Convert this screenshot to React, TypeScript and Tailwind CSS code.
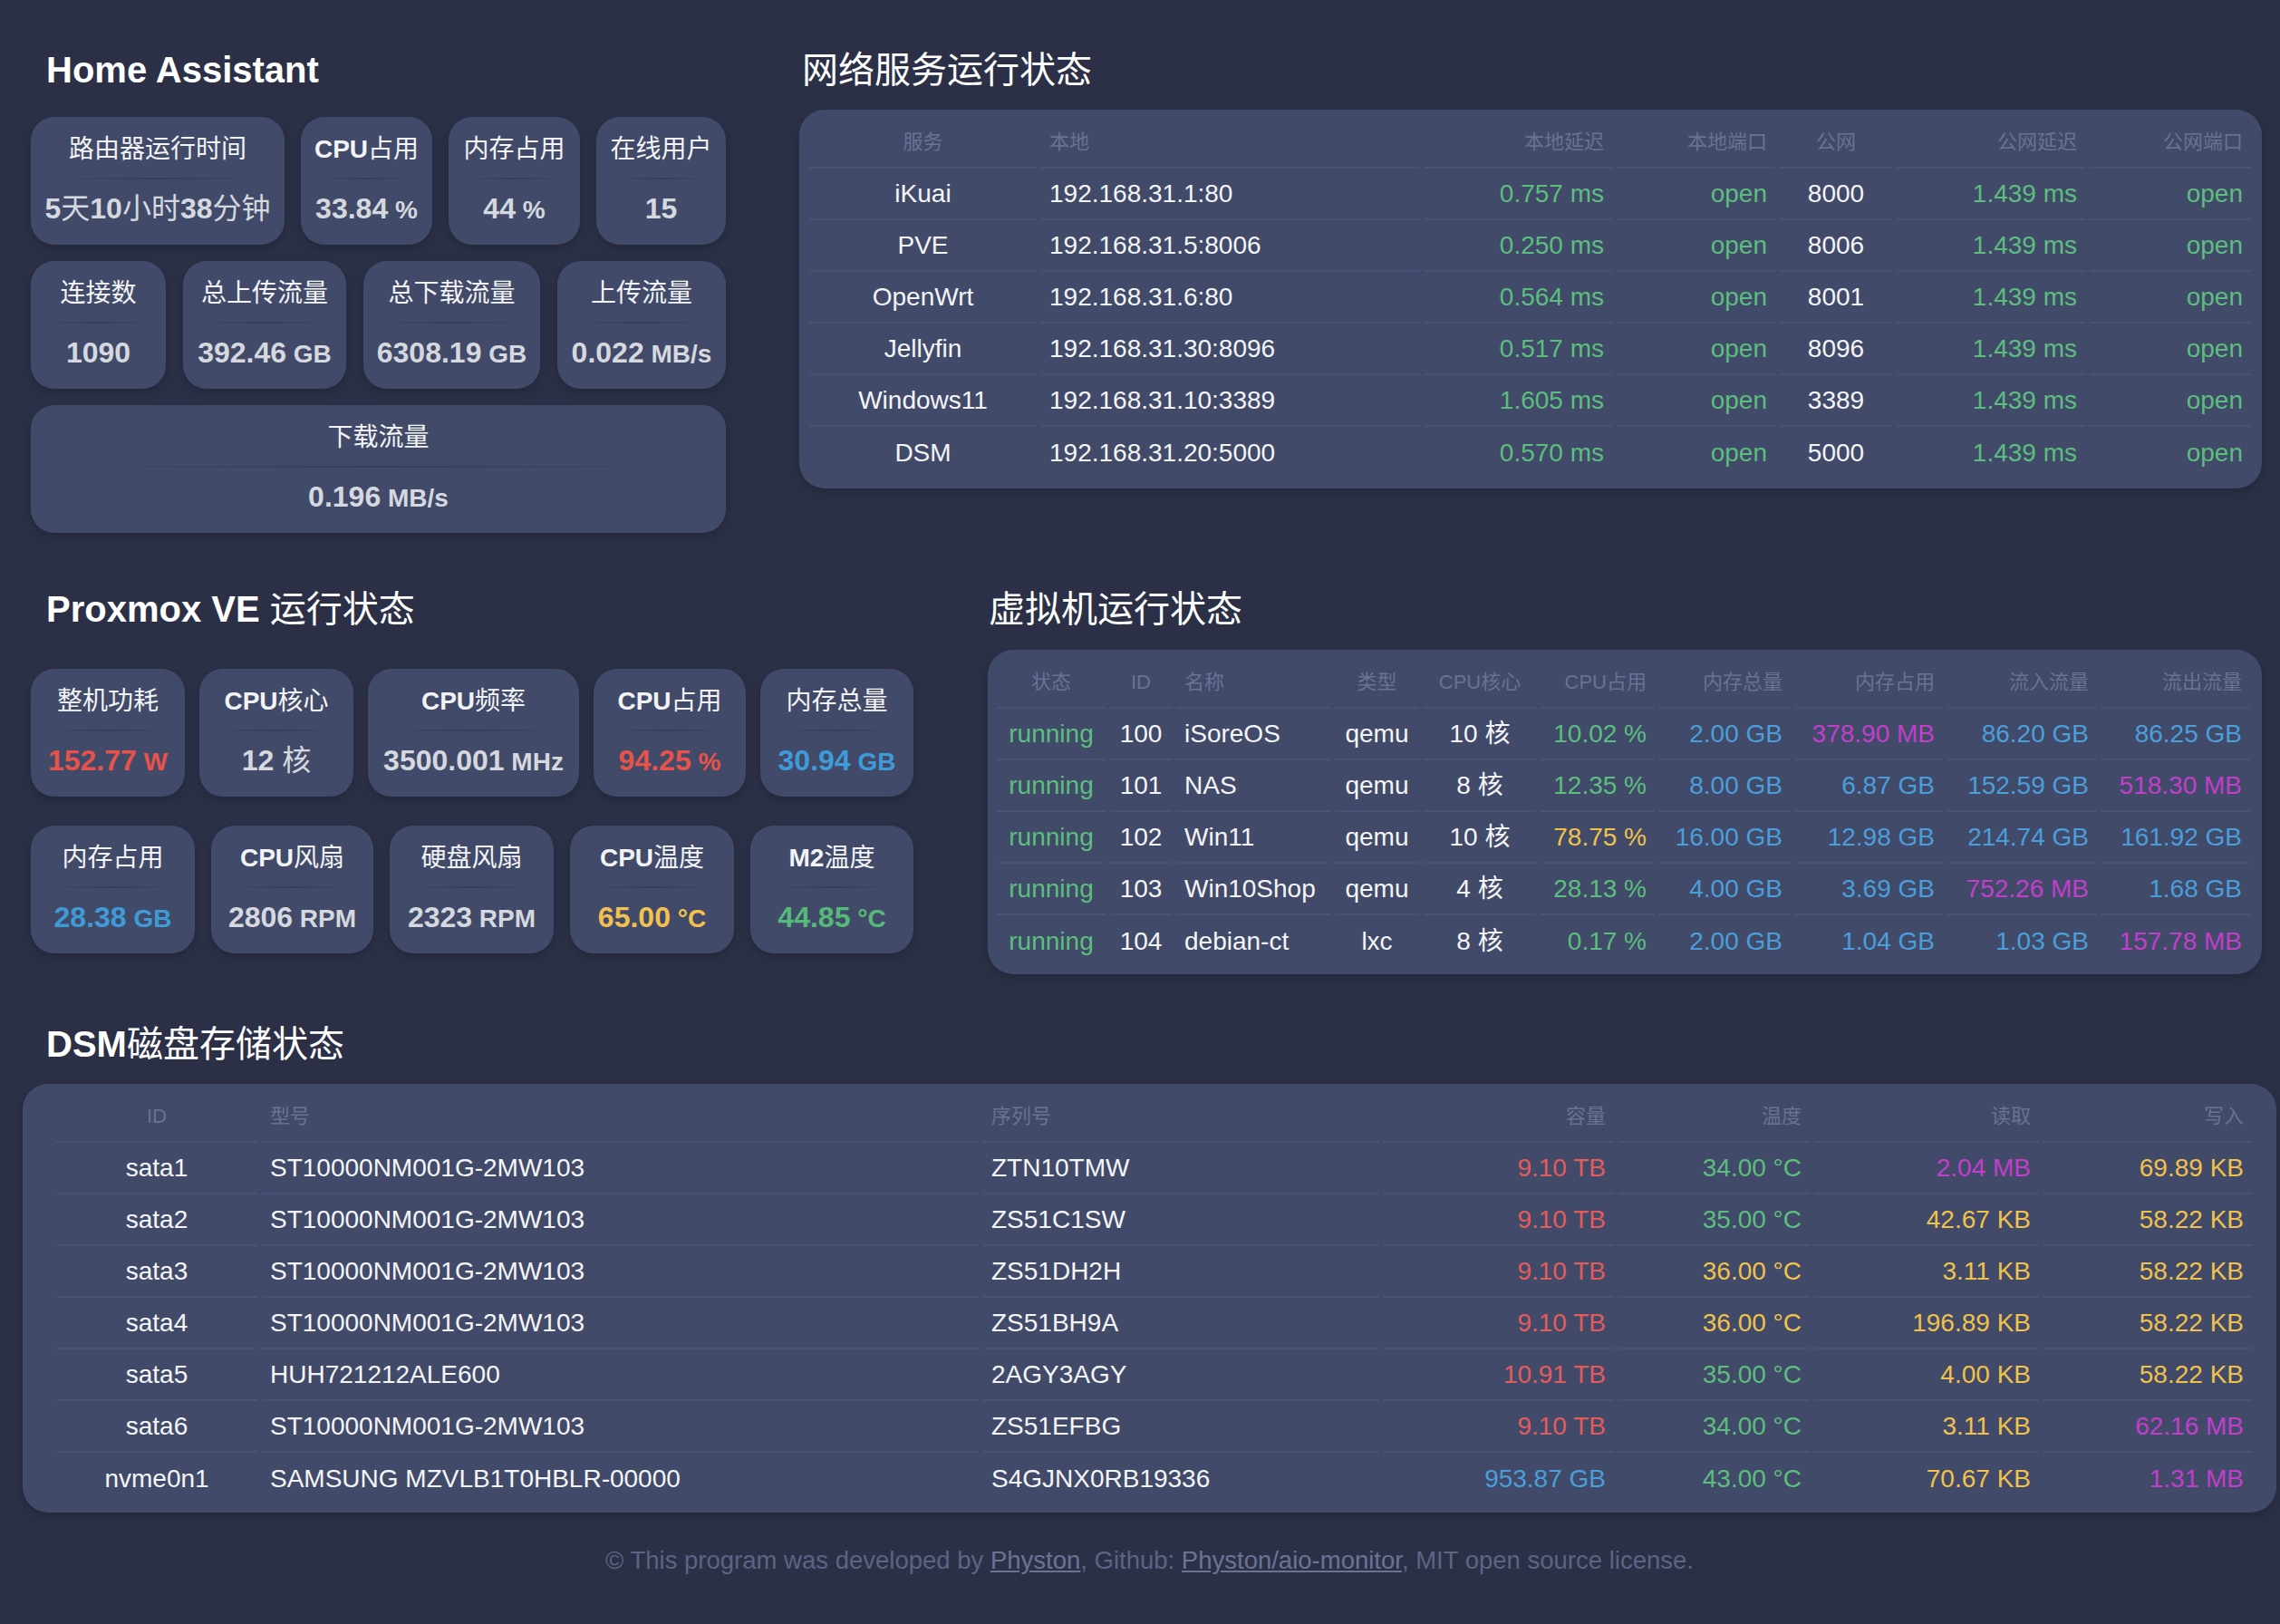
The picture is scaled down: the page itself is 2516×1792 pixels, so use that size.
import React from 'react';

type Stat = { label: string; value: string; unit?: string; color?: string; w: string };

const VAL = 'text-[#d5d8de]';
const RED = 'text-[#e5534b]';
const BLUE = 'text-[#3f9bd8]';
const YEL = 'text-[#f2c14e]';
const GRN = 'text-[#55b97a]';

// table text colours
const G = 'text-[#5cbe7e]';
const B = 'text-[#4a9fdb]';
const M = 'text-[#c13fcb]';
const Y = 'text-[#f0c24b]';
const R = 'text-[#e25c5c]';
const W = 'text-[#f4f5f7]';

const haRows: Stat[][] = [
  [
    { label: '路由器运行时间', value: '5天10小时38分钟', w: 'w-[280px]' },
    { label: 'CPU占用', value: '33.84', unit: '%', w: 'w-[145px]' },
    { label: '内存占用', value: '44', unit: '%', w: 'w-[145px]' },
    { label: '在线用户', value: '15', w: 'w-[143px]' },
  ],
  [
    { label: '连接数', value: '1090', w: 'w-[149px]' },
    { label: '总上传流量', value: '392.46', unit: 'GB', w: 'w-[180px]' },
    { label: '总下载流量', value: '6308.19', unit: 'GB', w: 'w-[195px]' },
    { label: '上传流量', value: '0.022', unit: 'MB/s', w: 'w-[186px]' },
  ],
  [{ label: '下载流量', value: '0.196', unit: 'MB/s', w: 'w-full' }],
];

const pveRows: Stat[][] = [
  [
    { label: '整机功耗', value: '152.77', unit: 'W', color: RED, w: 'w-[170px]' },
    { label: 'CPU核心', value: '12 核', w: 'w-[170px]' },
    { label: 'CPU频率', value: '3500.001', unit: 'MHz', w: 'w-[233px]' },
    { label: 'CPU占用', value: '94.25', unit: '%', color: RED, w: 'w-[168px]' },
    { label: '内存总量', value: '30.94', unit: 'GB', color: BLUE, w: 'w-[169px]' },
  ],
  [
    { label: '内存占用', value: '28.38', unit: 'GB', color: BLUE, w: 'w-[181px]' },
    { label: 'CPU风扇', value: '2806', unit: 'RPM', w: 'w-[179px]' },
    { label: '硬盘风扇', value: '2323', unit: 'RPM', w: 'w-[181px]' },
    { label: 'CPU温度', value: '65.00', unit: '°C', color: YEL, w: 'w-[181px]' },
    { label: 'M2温度', value: '44.85', unit: '°C', color: GRN, w: 'w-[180px]' },
  ],
];

type Col = { h: string; w: string; align: string };
type Cell = [string, string];

const netCols: Col[] = [
  { h: '服务', w: 'w-[251px]', align: 'text-center' },
  { h: '本地', w: '', align: 'text-left' },
  { h: '本地延迟', w: 'w-[207px]', align: 'text-right' },
  { h: '本地端口', w: 'w-[175px]', align: 'text-right' },
  { h: '公网', w: 'w-[124px]', align: 'text-center' },
  { h: '公网延迟', w: 'w-[208px]', align: 'text-right' },
  { h: '公网端口', w: 'w-[178px]', align: 'text-right' },
];

const net = (name: string, local: string, lat: string, port: string): Cell[] => [
  [name, W],
  [local, W],
  [lat, G],
  ['open', G],
  [port, W],
  ['1.439 ms', G],
  ['open', G],
];

const netRows: Cell[][] = [
  net('iKuai', '192.168.31.1:80', '0.757 ms', '8000'),
  net('PVE', '192.168.31.5:8006', '0.250 ms', '8006'),
  net('OpenWrt', '192.168.31.6:80', '0.564 ms', '8001'),
  net('Jellyfin', '192.168.31.30:8096', '0.517 ms', '8096'),
  net('Windows11', '192.168.31.10:3389', '1.605 ms', '3389'),
  net('DSM', '192.168.31.20:5000', '0.570 ms', '5000'),
];

const vmCols: Col[] = [
  { h: '状态', w: 'w-[120px]', align: 'text-center' },
  { h: 'ID', w: 'w-[68px]', align: 'text-center' },
  { h: '名称', w: '', align: 'text-left' },
  { h: '类型', w: 'w-[93px]', align: 'text-center' },
  { h: 'CPU核心', w: 'w-[124px]', align: 'text-center' },
  { h: 'CPU占用', w: 'w-[126px]', align: 'text-right' },
  { h: '内存总量', w: 'w-[145px]', align: 'text-right' },
  { h: '内存占用', w: 'w-[163px]', align: 'text-right' },
  { h: '流入流量', w: 'w-[165px]', align: 'text-right' },
  { h: '流出流量', w: 'w-[164px]', align: 'text-right' },
];

const vmRows: Cell[][] = [
  [['running', G], ['100', W], ['iSoreOS', W], ['qemu', W], ['10 核', W], ['10.02 %', G], ['2.00 GB', B], ['378.90 MB', M], ['86.20 GB', B], ['86.25 GB', B]],
  [['running', G], ['101', W], ['NAS', W], ['qemu', W], ['8 核', W], ['12.35 %', G], ['8.00 GB', B], ['6.87 GB', B], ['152.59 GB', B], ['518.30 MB', M]],
  [['running', G], ['102', W], ['Win11', W], ['qemu', W], ['10 核', W], ['78.75 %', Y], ['16.00 GB', B], ['12.98 GB', B], ['214.74 GB', B], ['161.92 GB', B]],
  [['running', G], ['103', W], ['Win10Shop', W], ['qemu', W], ['4 核', W], ['28.13 %', G], ['4.00 GB', B], ['3.69 GB', B], ['752.26 MB', M], ['1.68 GB', B]],
  [['running', G], ['104', W], ['debian-ct', W], ['lxc', W], ['8 核', W], ['0.17 %', G], ['2.00 GB', B], ['1.04 GB', B], ['1.03 GB', B], ['157.78 MB', M]],
];

const diskCols: Col[] = [
  { h: 'ID', w: 'w-[222px]', align: 'text-center' },
  { h: '型号', w: '', align: 'text-left' },
  { h: '序列号', w: 'w-[437px]', align: 'text-left' },
  { h: '容量', w: 'w-[254px]', align: 'text-right' },
  { h: '温度', w: 'w-[211px]', align: 'text-right' },
  { h: '读取', w: 'w-[248px]', align: 'text-right' },
  { h: '写入', w: 'w-[230px]', align: 'text-right' },
];

const ST = 'ST10000NM001G-2MW103';
const diskRows: Cell[][] = [
  [['sata1', W], [ST, W], ['ZTN10TMW', W], ['9.10 TB', R], ['34.00 °C', G], ['2.04 MB', M], ['69.89 KB', Y]],
  [['sata2', W], [ST, W], ['ZS51C1SW', W], ['9.10 TB', R], ['35.00 °C', G], ['42.67 KB', Y], ['58.22 KB', Y]],
  [['sata3', W], [ST, W], ['ZS51DH2H', W], ['9.10 TB', R], ['36.00 °C', Y], ['3.11 KB', Y], ['58.22 KB', Y]],
  [['sata4', W], [ST, W], ['ZS51BH9A', W], ['9.10 TB', R], ['36.00 °C', Y], ['196.89 KB', Y], ['58.22 KB', Y]],
  [['sata5', W], ['HUH721212ALE600', W], ['2AGY3AGY', W], ['10.91 TB', R], ['35.00 °C', G], ['4.00 KB', Y], ['58.22 KB', Y]],
  [['sata6', W], [ST, W], ['ZS51EFBG', W], ['9.10 TB', R], ['34.00 °C', G], ['3.11 KB', Y], ['62.16 MB', M]],
  [['nvme0n1', W], ['SAMSUNG MZVLB1T0HBLR-00000', W], ['S4GJNX0RB19336', W], ['953.87 GB', B], ['43.00 °C', G], ['70.67 KB', Y], ['1.31 MB', M]],
];

// latin runs are bold, CJK runs stay regular
function Mixed({ text }: { text: string }) {
  const parts = text.split(/([\x00-\x7F]+)/).filter(Boolean);
  return (
    <>
      {parts.map((p, i) =>
        /^[\x00-\x7F]+$/.test(p) ? (
          <span key={i} className="font-bold">{p}</span>
        ) : (
          <span key={i} className="font-normal">{p}</span>
        )
      )}
    </>
  );
}

function Title({ text, className = '' }: { text: string; className?: string }) {
  return (
    <h2 className={`h-[50px] text-[40px] leading-[50px] text-white whitespace-nowrap ${className}`}>
      <Mixed text={text} />
    </h2>
  );
}

function StatCard({ s }: { s: Stat }) {
  return (
    <div className={`h-[141px] rounded-[26px] bg-[#424a69] px-[10px] pt-[17px] shadow-[0_4px_10px_rgba(0,0,0,0.18)] ${s.w}`}>
      <div className="text-center text-[28px] leading-[38px] text-[#f3f4f6] whitespace-nowrap">
        <Mixed text={s.label} />
      </div>
      <div className="mx-[10px] mt-[12px] h-[2px] bg-linear-to-r from-transparent via-[#363e5b] to-transparent" />
      <div className={`mt-[13px] text-center text-[32px] leading-[38px] whitespace-nowrap ${s.color ?? VAL}`}>
        <Mixed text={s.value} />
        {s.unit && <span className="font-bold text-[28px]"> {s.unit}</span>}
      </div>
    </div>
  );
}

function DataTable({ cols, rows }: { cols: Col[]; rows: Cell[][] }) {
  return (
    <table className="w-full table-fixed border-separate border-spacing-x-[5px] border-spacing-y-0">
      <thead>
        <tr>
          {cols.map((c) => (
            <th
              key={c.h}
              className={`h-[57px] border-b-2 border-[#4a5375] px-[9px] text-[22px] font-normal text-[#6a7292] ${c.w} ${c.align}`}
            >
              {c.h}
            </th>
          ))}
        </tr>
      </thead>
      <tbody>
        {rows.map((r, i) => (
          <tr key={i}>
            {r.map(([t, color], j) => (
              <td
                key={j}
                className={`h-[57px] px-[9px] text-[28px] whitespace-nowrap ${cols[j].align} ${color} ${
                  i === rows.length - 1 ? 'border-b-0' : 'border-b-2 border-[#4a5375]'
                }`}
              >
                {t}
              </td>
            ))}
          </tr>
        ))}
      </tbody>
    </table>
  );
}

export default function App() {
  return (
    <div className="min-h-screen bg-[#2b3047] font-['Liberation_Sans','Noto_Sans_CJK_SC',sans-serif] text-white">
      <div className="pl-[34px] pr-[20px] pt-[52px]">
        {/* row 1 */}
        <div className="flex gap-[81px]">
          <section className="w-[767px] shrink-0">
            <Title text="Home Assistant" className="pl-[17px]" />
            <div className="mt-[27px] flex flex-col gap-[18px]">
              {haRows.map((row, i) => (
                <div key={i} className="flex justify-between">
                  {row.map((s) => (
                    <StatCard key={s.label} s={s} />
                  ))}
                </div>
              ))}
            </div>
          </section>
          <section className="flex-1">
            <Title text="网络服务运行状态" className="pl-[3px]" />
            <div className="mt-[19px] rounded-[28px] bg-[#424a69] pb-[11px] pl-[6px] pr-[7px] pt-[8px] shadow-[0_4px_10px_rgba(0,0,0,0.18)]">
              <DataTable cols={netCols} rows={netRows} />
            </div>
          </section>
        </div>

        {/* row 2 */}
        <div className="mt-[59px] flex gap-[82px]">
          <section className="w-[974px] shrink-0">
            <Title text="Proxmox VE 运行状态" className="pl-[17px]" />
            <div className="mt-[41px] flex flex-col gap-[32px]">
              {pveRows.map((row, i) => (
                <div key={i} className="flex justify-between">
                  {row.map((s) => (
                    <StatCard key={s.label} s={s} />
                  ))}
                </div>
              ))}
            </div>
          </section>
          <section className="flex-1">
            <Title text="虚拟机运行状态" className="pl-[1px]" />
            <div className="mt-[20px] rounded-[28px] bg-[#424a69] pb-[8px] pl-[5px] pr-[8px] pt-[8px] shadow-[0_4px_10px_rgba(0,0,0,0.18)]">
              <DataTable cols={vmCols} rows={vmRows} />
            </div>
          </section>
        </div>

        {/* DSM */}
        <section className="mt-[52px]">
          <Title text="DSM磁盘存储状态" className="pl-[17px]" />
          <div className="-ml-[9px] -mr-[16px] mt-[19px] rounded-[28px] bg-[#424a69] pb-[9px] pl-[32px] pr-[22px] pt-[8px] shadow-[0_4px_10px_rgba(0,0,0,0.18)]">
            <DataTable cols={diskCols} rows={diskRows} />
          </div>
        </section>

        <footer className="-ml-[9px] -mr-[16px] mt-[33px] pb-[40px] text-center text-[27.5px] leading-[40px] text-[#5c6483]">
          © This program was developed by{' '}
          <a className="text-[#6b7394] underline">Physton</a>, Github:{' '}
          <a className="text-[#6b7394] underline">Physton/aio-monitor</a>, MIT open source license.
        </footer>
      </div>
    </div>
  );
}
